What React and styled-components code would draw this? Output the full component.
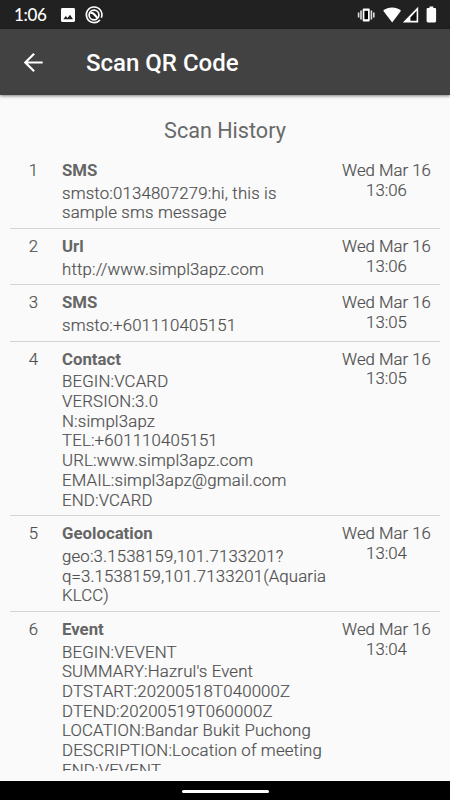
import styled, { createGlobalStyle } from "styled-components";

const history = [
  {
    type: "SMS",
    lines: ["smsto:0134807279:hi, this is", "sample sms message"],
    time: "13:06",
  },
  { type: "Url", lines: ["http://www.simpl3apz.com"], time: "13:06" },
  { type: "SMS", lines: ["smsto:+601110405151"], time: "13:05" },
  {
    type: "Contact",
    lines: [
      "BEGIN:VCARD",
      "VERSION:3.0",
      "N:simpl3apz",
      "TEL:+601110405151",
      "URL:www.simpl3apz.com",
      "EMAIL:simpl3apz@gmail.com",
      "END:VCARD",
    ],
    time: "13:05",
  },
  {
    type: "Geolocation",
    lines: ["geo:3.1538159,101.7133201?", "q=3.1538159,101.7133201(Aquaria", "KLCC)"],
    time: "13:04",
  },
  {
    type: "Event",
    lines: [
      "BEGIN:VEVENT",
      "SUMMARY:Hazrul's Event",
      "DTSTART:20200518T040000Z",
      "DTEND:20200519T060000Z",
      "LOCATION:Bandar Bukit Puchong",
      "DESCRIPTION:Location of meeting",
      "END:VEVENT",
    ],
    time: "13:04",
  },
];

const App = () => (
  <Screen>
    <GlobalStyle />
    <StatusBar>
      <Clock>1:06</Clock>
      <Notifications>
        <svg width="14" height="14" viewBox="0 0 14 14">
          <rect width="14" height="14" rx="1.4" fill="#fff" />
          <path d="M2.3 11.2 4.8 8l1.8 2.1L9 6.8l3 4.4z" fill="#212121" />
        </svg>
        <svg width="18" height="18" viewBox="0 0 18 18" fill="none" stroke="#fff">
          <path d="M15 13.9A7.8 7.8 0 1 1 16.3 11.8" strokeWidth="1.6" />
          <circle cx="9" cy="9" r="4.9" strokeWidth="1.7" />
          <path d="M5.4 7.2c1.8-.4 2.8 0 3.7 1l3.5 3.9" strokeWidth="2.1" />
        </svg>
      </Notifications>
      <svg width="82" height="20" viewBox="0 0 82 20" fill="#fff">
        <rect x="4.7" y="3.6" width="7" height="12.8" rx="1" />
        <rect x="6.4" y="5.8" width="3.6" height="8.4" fill="#000" />
        <path
          d="M2.2 5.4h1.6v9.2H2.2zM-.2 7.6h1.6v4.8H-.2zM12.6 5.4h1.6v9.2h-1.6zM15 7.6h1.6v4.8H15z"
          opacity=".85"
        />
        <path d="M25.2 5.7C30.2 1.3 38 1.3 43 5.7L34.2 17.4z" />
        <path d="M60.2 1.8V17.4H44.8z" />
        <path d="M58.6 5.8 52.4 12.4v3.4h6.2z" fill="#111" />
        <path d="M71.5 1.5h3.8V3h1.5c.8 0 1.3.5 1.3 1.3V16c0 .8-.5 1.4-1.3 1.4H70c-.8 0-1.4-.6-1.4-1.4V4.3c0-.8.6-1.3 1.4-1.3h1.5z" />
      </svg>
    </StatusBar>

    <Toolbar>
      <BackButton aria-label="Back">
        <svg width="20" height="20" viewBox="0 0 20 20" fill="none" stroke="#fff" strokeWidth="2.2">
          <path d="M19.7 9.5H2.4M11.1.7 2.3 9.5l8.8 8.8" />
        </svg>
      </BackButton>
      <Title>Scan QR Code</Title>
    </Toolbar>

    <Content>
      <Heading>Scan History</Heading>
      <List>
        {history.map((item, index) => (
          <Row key={index}>
            <Number>{index + 1}</Number>
            <Details>
              <Type>{item.type}</Type>
              {item.lines.map((line) => (
                <Line key={line}>{line}</Line>
              ))}
            </Details>
            <ScanDate>
              Wed Mar 16
              <br />
              {item.time}
            </ScanDate>
          </Row>
        ))}
      </List>
    </Content>

    <NavigationBar>
      <HomeHandle />
    </NavigationBar>
  </Screen>
);

const GlobalStyle = createGlobalStyle`
  * {
    box-sizing: border-box;
  }

  body {
    margin: 0;
    overflow: hidden;
  }
`;

const Screen = styled.div`
  width: 450px;
  height: 800px;
  display: flex;
  flex-direction: column;
  background: #fafafa;
  color: #505050;
  font-family: Roboto, sans-serif;
  overflow: hidden;

  svg {
    display: block;
    flex-shrink: 0;
    overflow: visible;
  }
`;

const StatusBar = styled.div`
  height: 29px;
  flex-shrink: 0;
  display: flex;
  align-items: center;
  padding: 0 10px 0 14px;
  background: #212121;
  color: #fff;
`;

const Clock = styled.span`
  width: 47px;
  font-family: Lato, sans-serif;
  font-size: 17px;
  font-weight: 500;
  letter-spacing: -0.3px;
`;

const Notifications = styled.div`
  flex: 1;
  display: flex;
  align-items: center;
  gap: 10px;
`;

const Toolbar = styled.header`
  height: 66px;
  flex-shrink: 0;
  display: flex;
  align-items: center;
  padding: 2px 23px 0;
  background: #424242;
  color: #fff;
  box-shadow: 0 1px 3px rgba(0, 0, 0, 0.5);
`;

const BackButton = styled.button`
  width: 63px;
  padding: 0;
  border: 0;
  background: none;
`;

const Title = styled.h1`
  margin: 0;
  font-size: 24px;
  font-weight: 500;
`;

const Content = styled.main`
  height: 675.5px;
  flex-shrink: 0;
  display: flex;
  flex-direction: column;
  padding: 21px 10px 0;
  overflow: hidden;
`;

const Heading = styled.h2`
  margin: 0;
  height: 37.1px;
  flex-shrink: 0;
  font-size: 21.6px;
  font-weight: 400;
  line-height: 30px;
  text-align: center;
  color: #696969;
`;

const List = styled.div`
  flex-shrink: 0;
`;

const Row = styled.div`
  display: flex;
  padding: 8px 0 5px;
  border-bottom: 1px solid #d3d3d3;
  font-size: 16.8px;
  font-weight: 300;
  line-height: 19.67px;
  -webkit-text-stroke: 0.2px;
`;

const Number = styled.div`
  width: 47px;
  text-align: center;
`;

const Details = styled.div`
  width: 275px;
  padding-left: 5px;
`;

const Type = styled.div`
  margin-bottom: 3px;
  font-weight: 700;
  color: #666;
  -webkit-text-stroke: 0;
`;

const Line = styled.div`
  letter-spacing: 0.16px;
  white-space: nowrap;
`;

const ScanDate = styled.div`
  flex: 1;
  padding-left: 1px;
  text-align: center;
  white-space: nowrap;
`;

const NavigationBar = styled.div`
  flex: 1;
  margin-top: 10.5px;
  display: flex;
  justify-content: center;
  padding-top: 9px;
  background: #000;
`;

const HomeHandle = styled.div`
  width: 87px;
  height: 3px;
  border-radius: 2px;
  background: #fff;
`;

export default App;
